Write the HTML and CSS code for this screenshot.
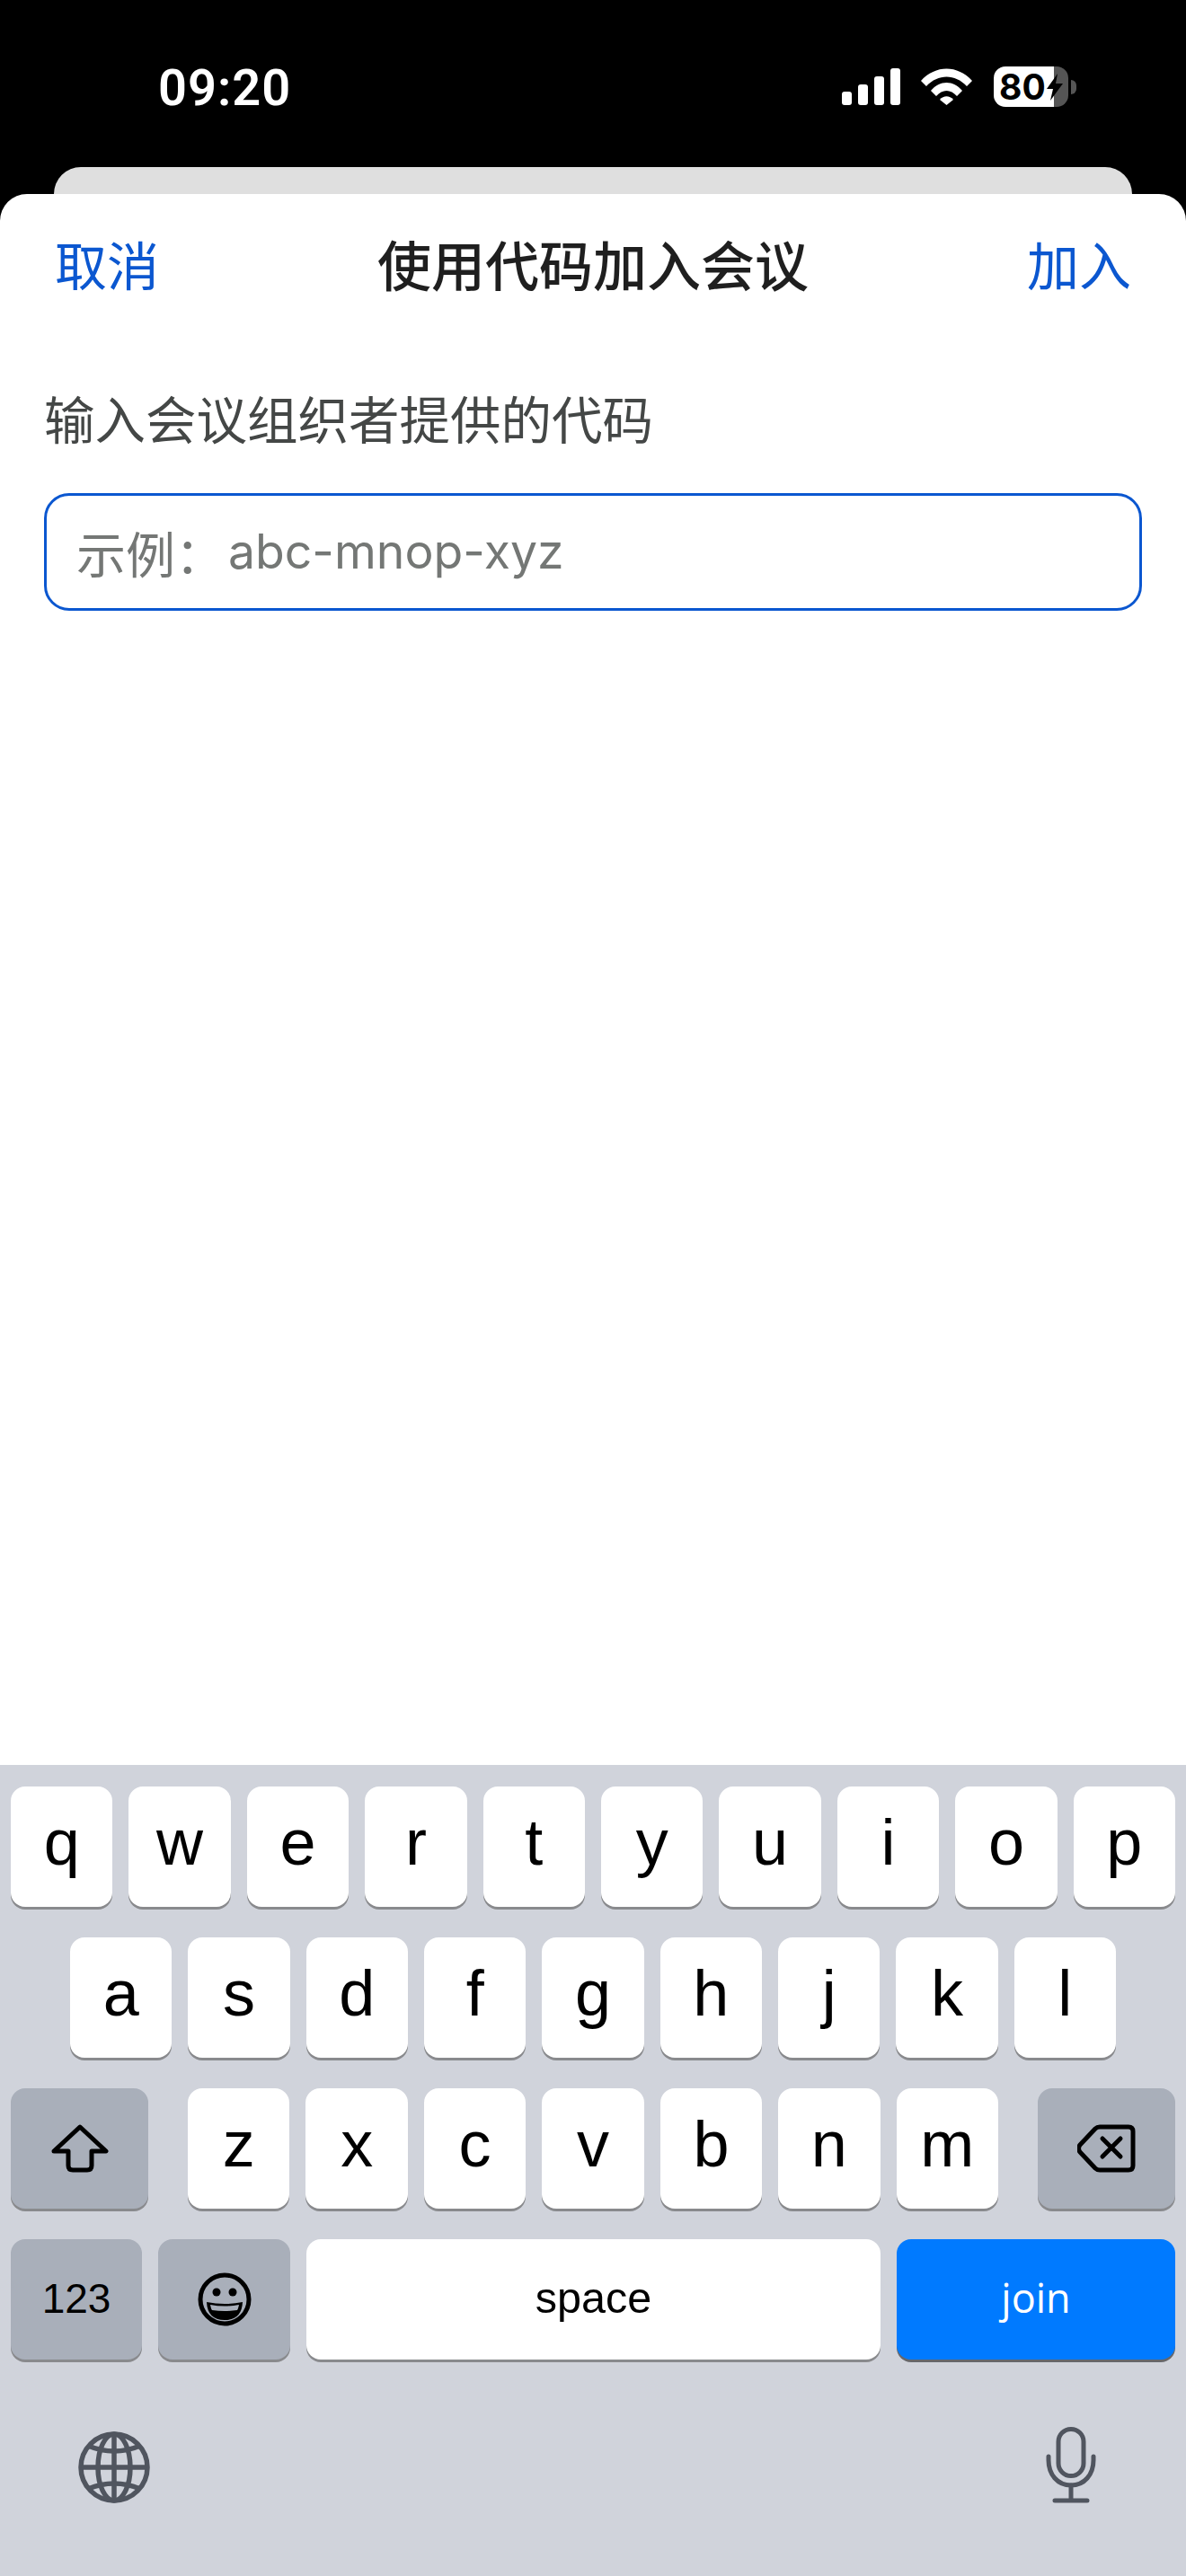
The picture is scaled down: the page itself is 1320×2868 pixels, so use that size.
FILE: index.html
```html
<!DOCTYPE html>
<html lang="zh-CN">
<head>
    <meta charset="UTF-8">
    <meta name="viewport" content="width=device-width, initial-scale=1.0">
    <title>使用代码加入会议</title>
    <link rel="stylesheet" href="styles.css">
</head>
<body>
    <div class="status-bar">
        <span class="time">09:20</span>
        <div class="status-icons">
            <div class="signal">
                <span class="bar bar-1"></span>
                <span class="bar bar-2"></span>
                <span class="bar bar-3"></span>
                <span class="bar bar-4"></span>
            </div>
            <svg class="wifi" width="57" height="41" viewBox="0 0 57 41">
                <path d="M0 14 C16 -4 41 -4 57 14 L51 20 C38 6 19 6 6 20 Z" fill="#fff"/>
                <path d="M11 25 C21 13 36 13 46 25 L40 31 C33 23 24 23 17 31 Z" fill="#fff"/>
                <path d="M21 35 C25 30 32 30 36 35 L28.500 41 Z" fill="#fff"/>
            </svg>
            <div class="battery">
                <div class="battery-body">
                    <span class="battery-level">80</span>
                    <svg class="bolt" width="20" height="30" viewBox="0 0 20 30">
                        <path d="M13 0 L1 17 H8 L5 30 L19 11 H11 Z" fill="#000"/>
                    </svg>
                </div>
                <span class="battery-nub"></span>
            </div>
        </div>
    </div>
    <div class="back-sheet"></div>

    <div class="sheet">
        <div class="sheet-header">
            <span class="action">取消</span>
            <span class="sheet-title">使用代码加入会议</span>
            <span class="action">加入</span>
        </div>
        <p class="label">输入会议组织者提供的代码</p>
        <div class="code-field">
            <span class="placeholder-cjk">示例：</span><span class="placeholder-latin">abc-mnop-xyz</span>
        </div>
    </div>

    <div class="keyboard">
        <div class="key-row">
            <div class="key">q</div>
            <div class="key">w</div>
            <div class="key">e</div>
            <div class="key">r</div>
            <div class="key">t</div>
            <div class="key">y</div>
            <div class="key">u</div>
            <div class="key">i</div>
            <div class="key">o</div>
            <div class="key">p</div>
        </div>
        <div class="key-row row-middle">
            <div class="key">a</div>
            <div class="key">s</div>
            <div class="key">d</div>
            <div class="key">f</div>
            <div class="key">g</div>
            <div class="key">h</div>
            <div class="key">j</div>
            <div class="key">k</div>
            <div class="key">l</div>
        </div>
        <div class="key-row">
            <div class="key key-dark key-shift">
                <svg width="64" height="54" viewBox="0 0 64 54">
                    <path d="M32 3 L61 30 H45 V46 Q45 51 40 51 H24 Q19 51 19 46 V30 H3 Z" fill="none" stroke="#000" stroke-width="5" stroke-linejoin="round"/>
                </svg>
            </div>
            <div class="key key-letter-z">z</div>
            <div class="key">x</div>
            <div class="key">c</div>
            <div class="key">v</div>
            <div class="key">b</div>
            <div class="key">n</div>
            <div class="key key-letter-m">m</div>
            <div class="key key-dark key-delete">
                <svg width="65" height="54" viewBox="0 0 65 54">
                    <path d="M25 3 H57 Q62 3 62 8 V46 Q62 51 57 51 H25 Q22 51 20 49 L3 31 Q0 27 3 23 L20 5 Q22 3 25 3 Z" fill="none" stroke="#000" stroke-width="5" stroke-linejoin="round"/>
                    <path d="M28 16 L48 36 M48 16 L28 36" fill="none" stroke="#000" stroke-width="5" stroke-linecap="round"/>
                </svg>
            </div>
        </div>
        <div class="key-row">
            <div class="key key-dark key-num">123</div>
            <div class="key key-dark key-emoji">
                <svg width="60" height="60" viewBox="0 0 60 60">
                    <circle cx="30" cy="30" r="27" fill="none" stroke="#000" stroke-width="5"/>
                    <circle cx="21" cy="22" r="4.500" fill="#000"/>
                    <circle cx="39" cy="22" r="4.500" fill="#000"/>
                    <path d="M10 33 Q30 37 50 33 Q49 53 30 53 Q11 53 10 33 Z" fill="#000"/>
                    <path d="M14 36 Q30 39 46 36 Q45 41 44 42 Q30 44 16 42 Q15 41 14 36 Z" fill="#a9afba"/>
                </svg>
            </div>
            <div class="key key-space">space</div>
            <div class="key key-join">join</div>
        </div>
        <div class="keyboard-bottom">
            <svg width="80" height="80" viewBox="0 0 80 80">
                <g fill="none" stroke="#50555f" stroke-width="5.500">
                    <circle cx="40" cy="40" r="37"/>
                    <ellipse cx="40" cy="40" rx="18" ry="37"/>
                    <path d="M40 3 V77 M3 40 H77"/>
                    <path d="M11 16 Q40 28 69 16 M11 64 Q40 52 69 64"/>
                </g>
            </svg>
            <svg width="56" height="85" viewBox="0 0 56 85">
                <g fill="none" stroke="#50555f" stroke-width="5" stroke-linecap="round">
                    <rect x="14" y="2.500" width="28" height="52" rx="14"/>
                    <path d="M3 33 V37 C3 53 13 65 28 65 C43 65 53 53 53 37 V33"/>
                    <path d="M28 65 V82 M10 82 H46"/>
                </g>
            </svg>
        </div>
    </div>
</body>
</html>
```

FILE: styles.css
```css
body {
    margin: 0;
    height: 2868px;
    display: flex;
    flex-direction: column;
    background-color: #000;
    font-family: "Noto Sans CJK SC", sans-serif;
    overflow: hidden;
}

.status-bar {
    height: 186px;
    box-sizing: border-box;
    padding: 74px 122px 0 176px;
    display: flex;
    justify-content: space-between;
    align-items: flex-start;
}
.time {
    font-family: Roboto, sans-serif;
    font-size: 56px;
    font-weight: 600;
    line-height: 48px;
    letter-spacing: 1px;
    color: #fff;
}
.status-icons {
    display: flex;
    align-items: flex-start;
}
.signal {
    width: 65px;
    height: 43px;
    display: flex;
    justify-content: space-between;
    align-items: flex-end;
}
.bar {
    width: 11px;
    background-color: #fff;
    border-radius: 3px;
}
.bar-1 { height: 15px; }
.bar-2 { height: 23px; }
.bar-3 { height: 32px; }
.bar-4 { height: 41px; }
.wifi {
    margin: 2px 24px 0 23px;
}
.battery {
    display: flex;
    align-items: center;
}
.battery-body {
    width: 83px;
    height: 45px;
    display: flex;
    align-items: center;
    box-sizing: border-box;
    padding-left: 6px;
    border-radius: 13px;
    background: linear-gradient(to right, #fff 67px, #555 67px);
}
.battery-level {
    font-family: Inter, sans-serif;
    font-size: 39px;
    font-weight: 700;
    line-height: 45px;
    color: #000;
}
.bolt {
    flex: none;
    margin-left: 0;
}
.battery-nub {
    width: 6px;
    height: 16px;
    margin-left: 3px;
    background-color: #555;
    border-radius: 0 8px 8px 0;
}

.back-sheet {
    height: 30px;
    margin: 0 60px;
    background-color: #dfdfdf;
    border-radius: 30px 30px 0 0;
}

.sheet {
    flex: 1;
    box-sizing: border-box;
    padding-top: 37px;
    background-color: #fff;
    border-radius: 30px 30px 0 0;
}
.sheet-header {
    display: flex;
    justify-content: space-between;
    align-items: center;
    padding: 0 61px;
}
.action {
    font-size: 58px;
    line-height: 80px;
    color: #0b57d0;
}
.sheet-title {
    font-size: 60px;
    font-weight: 500;
    line-height: 80px;
    color: #1f1f1f;
}
.label {
    margin: 91px 0 45px 49px;
    font-size: 56.500px;
    line-height: 80px;
    color: #444746;
}
.code-field {
    width: 1222px;
    height: 131px;
    margin-left: 49px;
    box-sizing: border-box;
    display: flex;
    align-items: center;
    padding-left: 33px;
    padding-bottom: 2px;
    border: 3px solid #0b57d0;
    border-radius: 28px;
    color: #747775;
}
.placeholder-cjk {
    width: 169px;
    font-size: 55px;
}
.placeholder-latin {
    font-family: Inter, sans-serif;
    font-size: 53.500px;
}

.keyboard {
    height: 903px;
    box-sizing: border-box;
    padding: 24px 12px 0;
    background-color: #d0d3db;
    font-family: "Liberation Sans", sans-serif;
    color: #000;
}
.key-row {
    display: flex;
    gap: 18px;
    margin-bottom: 34px;
}
.row-middle {
    padding: 0 66px;
}
.key {
    flex: 1;
    height: 134px;
    box-sizing: border-box;
    padding-bottom: 10px;
    display: flex;
    justify-content: center;
    align-items: center;
    background-color: #fff;
    border-radius: 16px;
    box-shadow: 0 3px 0 #898a8d;
    font-size: 72px;
    line-height: 124px;
}
.key-dark {
    background-color: #a9afba;
}
.key-shift,
.key-delete {
    flex: none;
    width: 153px;
    padding-bottom: 0;
}
.key-letter-z {
    margin-left: 26px;
}
.key-letter-m {
    margin-right: 26px;
}
.key-num {
    flex: none;
    width: 146px;
    padding-bottom: 2px;
    font-size: 46px;
}
.key-emoji {
    flex: none;
    width: 147px;
    padding-bottom: 0;
}
.key-space {
    flex: none;
    width: 639px;
    padding-bottom: 4px;
    font-size: 48.500px;
}
.key-join {
    flex: none;
    width: 310px;
    padding-bottom: 4px;
    background-color: #007aff;
    box-shadow: 0 3px 0 #66676b;
    font-family: "Open Sans", sans-serif;
    font-size: 45px;
    color: #fff;
}
.keyboard-bottom {
    display: flex;
    justify-content: space-between;
    align-items: flex-end;
    height: 126px;
    padding: 0 88px 0 75px;
}
```
